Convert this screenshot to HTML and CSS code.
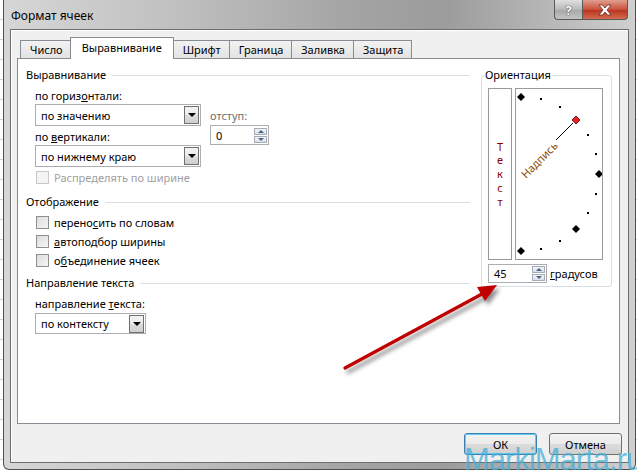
FILE: index.html
```html
<!DOCTYPE html>
<html lang="ru">
<head>
    <meta charset="UTF-8">
    <title>Формат ячеек</title>
    <link rel="stylesheet" href="styles.css">
</head>
<body>
    <div class="window">
        <div class="titlebar">
            <span class="title">Формат ячеек</span>
            <div class="caption-buttons">
                <div class="cap-btn help">?</div>
                <div class="cap-btn close">
                    <svg width="16" height="12" viewBox="0 0 16 12">
                        <path d="M2 1 L5.5 1 L8 4 L10.5 1 L14 1 L10 6 L14 11 L10.5 11 L8 8 L5.5 11 L2 11 L6 6 Z" fill="#fff" stroke="#6b2a22" stroke-width="0.8"/>
                    </svg>
                </div>
            </div>
        </div>

        <div class="client">
            <div class="tabs">
                <div class="tab">Число</div>
                <div class="tab active">Выравнивание</div>
                <div class="tab">Шрифт</div>
                <div class="tab">Граница</div>
                <div class="tab">Заливка</div>
                <div class="tab">Защита</div>
            </div>

            <div class="panel">
                <div class="left">
                    <div class="group-head"><span>Выравнивание</span><i></i></div>
                    <div class="align-block">
                        <div class="align-col">
                            <div class="label">по гориз<u>о</u>нтали:</div>
                            <div class="select wide">
                                <span>по значению</span>
                                <div class="drop"></div>
                            </div>
                            <div class="label gap3">по <u>в</u>ертикали:</div>
                            <div class="select wide">
                                <span>по нижнему краю</span>
                                <div class="drop"></div>
                            </div>
                        </div>
                        <div class="offset-col">
                            <div class="label muted">отступ:</div>
                            <div class="spinner">
                                <span>0</span>
                                <div class="spin-btns">
                                    <div class="spin up"></div>
                                    <div class="spin down"></div>
                                </div>
                            </div>
                        </div>
                    </div>
                    <div class="check disabled first"><span class="box"></span>Распределять по ширине</div>

                    <div class="group-head"><span>Отображение</span><i></i></div>
                    <div class="checks">
                        <div class="check"><span class="box"></span>перено<u>с</u>ить по словам</div>
                        <div class="check"><span class="box"></span><u>а</u>втоподбор ширины</div>
                        <div class="check"><span class="box"></span>о<u>б</u>ъединение ячеек</div>
                    </div>

                    <div class="group-head g3"><span>Направление текста</span><i></i></div>
                    <div class="label dir-label">направление <u>т</u>екста:</div>
                    <div class="select narrow">
                        <span>по контексту</span>
                        <div class="drop"></div>
                    </div>
                </div>

                <fieldset class="orient">
                    <legend>Ориентация</legend>
                    <div class="orient-boxes">
                        <div class="vtext">
                            <span>Т</span><span>е</span><span>к</span><span>с</span><span>т</span>
                        </div>
                        <div class="dial">
                            <svg width="86" height="170" viewBox="0 0 86 170">
                                <g fill="#000">
                                    <rect x="24" y="9" width="2" height="2"/>
                                    <rect x="43" y="17" width="2" height="2"/>
                                    <rect x="71" y="45" width="2" height="2"/>
                                    <rect x="79" y="64" width="2" height="2"/>
                                    <rect x="79" y="104" width="2" height="2"/>
                                    <rect x="71" y="123" width="2" height="2"/>
                                    <rect x="43" y="151" width="2" height="2"/>
                                    <rect x="24" y="159" width="2" height="2"/>
                                    <path d="M5 4 L9 8 L5 12 L1 8 Z"/>
                                    <path d="M83 81 L87 85 L83 89 L79 85 Z"/>
                                    <path d="M60 136 L64 140 L60 144 L56 140 Z"/>
                                    <path d="M5 158 L9 162 L5 166 L1 162 Z"/>
                                </g>
                                <line x1="57" y1="34" x2="40" y2="51" stroke="#000" stroke-width="1"/>
                                <path d="M60 27 L64 31 L60 35 L56 31 Z" fill="#e8231b" stroke="#5a0000" stroke-width="0.8"/>
                                <text x="0" y="0" transform="translate(10 90) rotate(-45)" class="dial-text">Надпись</text>
                            </svg>
                        </div>
                    </div>
                    <div class="deg-row">
                        <div class="spinner deg">
                            <span>45</span>
                            <div class="spin-btns">
                                <div class="spin up"></div>
                                <div class="spin down"></div>
                            </div>
                        </div>
                        <span class="deg-label"><u>г</u>радусов</span>
                    </div>
                </fieldset>
            </div>

            <div class="buttons">
                <div class="btn default">ОК</div>
                <div class="btn">Отмена</div>
            </div>
        </div>
    </div>

    <svg class="arrow" width="637" height="473" viewBox="0 0 637 473">
        <line x1="345" y1="368" x2="482" y2="294" stroke="#c00000" stroke-width="3.2" stroke-linecap="round"/>
        <polygon points="497,285 485,301 477,287" fill="#c00000"/>
    </svg>

    <div class="watermark">MarkiMarta.ru</div>
</body>
</html>
```

FILE: styles.css
```css
body {
    margin: 0;
    width: 637px;
    height: 473px;
    overflow: hidden;
    position: relative;
    font-family: "Noto Sans", "Liberation Sans", sans-serif;
    font-size: 11px;
    color: #000;
    background-color: #fff;
    background-image: repeating-linear-gradient(to bottom, transparent 0, transparent 19px, #d4d4d4 19px, #d4d4d4 20px);
}
.window {
    margin-left: 3px;
    width: 633px;
    height: 470px;
    box-sizing: border-box;
    border: 1px solid #4f4f4f;
    border-top: 0;
    border-radius: 0 0 6px 6px;
    padding: 0 6px 6px;
    background: linear-gradient(to right, #d6d6d6 0%, #c2c2c2 25%, #a4a4a4 55%, #9c9c9c 70%, #bdbdbd 90%, #d0d0d0 100%);
}
.titlebar {
    height: 29px;
    display: flex;
    justify-content: space-between;
}
.title {
    margin: 7px 0 0 1px;
    font-size: 12px;
    color: #000;
}
.caption-buttons {
    display: flex;
    margin-right: 1px;
    align-self: flex-start;
}
.cap-btn {
    height: 19px;
    border: 1px solid #5a5a5a;
    border-top: 0;
    display: flex;
    align-items: center;
    justify-content: center;
}
.help {
    width: 27px;
    border-radius: 0 0 0 4px;
    border-right: 0;
    background: linear-gradient(to bottom, #e0e0e0, #b8b8b8 50%, #a6a6a6 51%, #c4c4c4);
    color: #fff;
    font-weight: bold;
    font-size: 13px;
    text-shadow: 0 0 1px #333, 0 0 1px #333;
}
.close {
    width: 44px;
    border-radius: 0 0 4px 0;
    background: linear-gradient(to bottom, #e0a090, #c9503c 50%, #b8321e 51%, #d26a4e);
}
.client {
    height: 434px;
    box-sizing: border-box;
    border: 1px solid #6e6e6e;
    background: #f0f0f0;
    box-shadow: inset 1px 1px 0 #fff;
}
.tabs {
    display: flex;
    align-items: flex-end;
    height: 21px;
    margin: 7px 0 0 9px;
}
.tab {
    height: 18px;
    box-sizing: border-box;
    padding: 1px 8px 0 9px;
    line-height: 16px;
    border: 1px solid #898c95;
    border-bottom: 0;
    margin-right: -1px;
    background: linear-gradient(to bottom, #f2f2f2, #e3e3e3);
}
.tab.active {
    height: 22px;
    margin: 0 -1px -1px;
    padding: 2px 11px 0 11px;
    background: #fff;
    position: relative;
    z-index: 1;
}
.panel {
    height: 366px;
    box-sizing: border-box;
    margin: 0 8px 0 6px;
    border: 1px solid #898c95;
    background: #fff;
    display: flex;
    padding: 8px 0 0 8px;
}
.left {
    width: 444px;
    margin-right: 11px;
}
.group-head {
    display: flex;
    align-items: center;
    height: 16px;
    line-height: 16px;
}
.group-head i {
    flex: 1;
    height: 0;
    border-top: 1px solid #d5dfe5;
    margin-left: 6px;
    margin-top: 1px;
}
.label {
    height: 16px;
    line-height: 16px;
}
.muted {
    color: #6d6d6d;
}
.gap3 {
    margin-top: 3px;
}
.align-block {
    display: flex;
    padding: 5px 0 0 9px;
}
.align-col {
    width: 166px;
}
.offset-col {
    margin-left: 9px;
    padding-top: 20px;
}
.select {
    height: 22px;
    box-sizing: border-box;
    border: 1px solid #abadb3;
    display: flex;
    align-items: center;
    justify-content: space-between;
    padding: 0 1px 0 5px;
}
.select.wide {
    width: 166px;
}
.select.narrow {
    width: 111px;
    height: 21px;
    margin: 1px 0 0 9px;
}
.drop {
    width: 15px;
    height: 18px;
    box-sizing: border-box;
    border: 1px solid #707070;
    background: linear-gradient(to bottom, #f2f2f2, #ebebeb 50%, #dddddd 51%, #cfcfcf);
    display: flex;
    align-items: center;
    justify-content: center;
}
.drop::after {
    content: "";
    border-left: 4px solid transparent;
    border-right: 4px solid transparent;
    border-top: 4px solid #000;
}
.spinner {
    margin-top: 1px;
    width: 59px;
    height: 20px;
    box-sizing: border-box;
    border: 1px solid #abadb3;
    display: flex;
    align-items: center;
    justify-content: space-between;
    padding: 0 1px 0 5px;
}
.spin-btns {
    display: flex;
    flex-direction: column;
    gap: 1px;
}
.spin {
    width: 13px;
    height: 7px;
    box-sizing: border-box;
    border: 1px solid #a5acb5;
    background: linear-gradient(to bottom, #f3f5f8, #d9dfe7);
    display: flex;
    align-items: center;
    justify-content: center;
}
.spin.up::after {
    content: "";
    border-left: 3px solid transparent;
    border-right: 3px solid transparent;
    border-bottom: 3px solid #4d6185;
}
.spin.down::after {
    content: "";
    border-left: 3px solid transparent;
    border-right: 3px solid transparent;
    border-top: 3px solid #4d6185;
}
.check {
    display: flex;
    align-items: center;
    height: 19px;
    padding-left: 10px;
}
.check.first {
    margin-top: 1px;
    margin-bottom: 7px;
}
.check.disabled {
    color: #a0a0a0;
}
.box {
    width: 13px;
    height: 13px;
    box-sizing: border-box;
    border: 1px solid #8e8f8f;
    background: linear-gradient(135deg, #dcdcdc, #f6f6f6);
    margin-right: 5px;
}
.disabled .box {
    border-color: #c8c8c8;
    background: #f4f4f4;
}
.checks {
    margin-top: 3px;
}
.g3 {
    margin-top: 5px;
}
.dir-label {
    margin: 5px 0 0 9px;
}
.orient {
    margin: 0;
    width: 131px;
    height: 220px;
    box-sizing: border-box;
    border: 1px solid #d5dfe5;
    border-radius: 3px;
    padding: 5px 4px 4px 6px;
}
.orient legend {
    padding: 0 1px;
    margin-left: -4px;
    line-height: 16px;
}
.orient-boxes {
    display: flex;
    gap: 3px;
}
.vtext {
    width: 24px;
    height: 172px;
    box-sizing: border-box;
    border: 1px solid #9a9a9a;
    display: flex;
    flex-direction: column;
    align-items: center;
    justify-content: center;
    color: #8b0000;
    line-height: 13.7px;
}
.dial {
    width: 88px;
    height: 172px;
    box-sizing: border-box;
    border: 1px solid #9a9a9a;
    overflow: hidden;
}
.dial svg {
    display: block;
}
.dial-text {
    font-family: "Noto Sans", "Liberation Sans", sans-serif;
    font-size: 11px;
    fill: #8a4a00;
}
.deg-row {
    display: flex;
    align-items: center;
    margin-top: 4px;
}
.spinner.deg {
    margin-top: 0;
    height: 19px;
}
.deg-label {
    margin-left: 3px;
}
.buttons {
    display: flex;
    justify-content: flex-end;
    gap: 12px;
    margin-top: 9px;
    padding-right: 6px;
}
.btn {
    width: 73px;
    height: 22px;
    box-sizing: border-box;
    border: 1px solid #707070;
    border-radius: 3px;
    background: linear-gradient(to bottom, #f2f2f2, #ebebeb 50%, #dddddd 51%, #cfcfcf);
    display: flex;
    align-items: center;
    justify-content: center;
}
.btn.default {
    border-color: #3c7fb1;
    box-shadow: inset 0 0 0 1px #5fd0f5;
}
.arrow {
    position: absolute;
    left: 0;
    top: 0;
    pointer-events: none;
    filter: drop-shadow(3px 4px 2px rgba(0,0,0,0.45));
}
.watermark {
    position: absolute;
    left: 464px;
    top: 444px;
    font-family: "Liberation Sans", sans-serif;
    font-size: 31px;
    letter-spacing: -1px;
    color: rgba(70, 175, 215, 0.75);
    line-height: 31px;
    white-space: nowrap;
}
```
